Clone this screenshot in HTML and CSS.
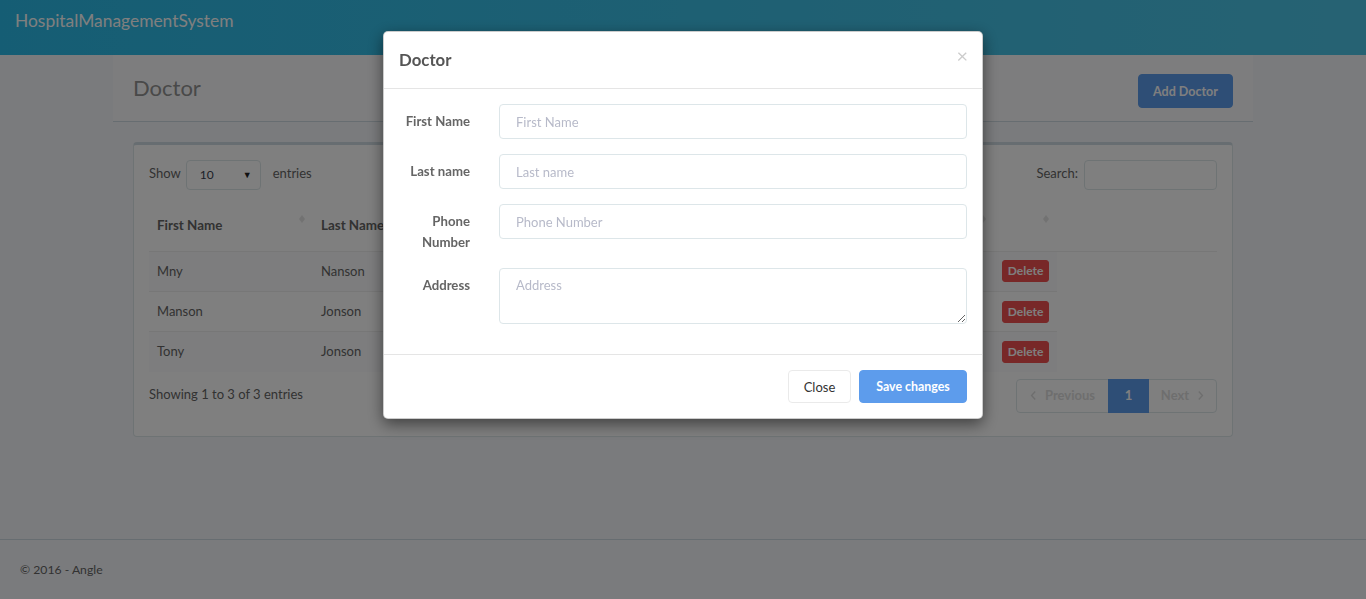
FILE: index.html
```html
<!DOCTYPE html>
<html lang="en">
<head>
<meta charset="utf-8">
<title>HospitalManagementSystem</title>
<link rel="stylesheet" href="styles.css">
</head>
<body>
<div class="wrapper">
  <header class="topbar">
    <div class="brand">HospitalManagementSystem</div>
  </header>
  <main class="main">
    <div class="container">
      <div class="content-heading">
        <h3 class="heading-title">Doctor</h3>
        <button class="btn btn-primary btn-add">Add Doctor</button>
      </div>
      <section class="panel">
        <div class="panel-body">
          <div class="dt-top">
            <div class="dt-length">
              <span>Show</span>
              <span class="fake-select"><span class="fs-val">10</span><span class="fs-caret">&#9660;</span></span>
              <span>entries</span>
            </div>
            <div class="dt-search">
              <span>Search:</span>
              <span class="search-input"></span>
            </div>
          </div>
          <div class="dt-head">
            <table class="tbl tbl-head">
              <thead>
                <tr>
                  <th class="c1">First Name<span class="sort"></span></th>
                  <th class="c2">Last Name<span class="sort"></span></th>
                  <th class="c3">Phone Number<span class="sort"></span></th>
                  <th class="c4">Address<span class="sort"></span></th>
                  <th class="c5"><span class="sort"></span></th>
                  <th class="c6"></th>
                </tr>
              </thead>
            </table>
          </div>
          <table class="tbl tbl-body">
            <tbody>
              <tr class="odd">
                <td class="c1">Mny</td><td class="c2">Nanson</td><td class="c3">0771234567</td><td class="c4">Colombo</td>
                <td class="c5"><button class="btn btn-danger btn-xs">Delete</button></td>
              </tr>
              <tr>
                <td class="c1">Manson</td><td class="c2">Jonson</td><td class="c3">0779876543</td><td class="c4">Kandy</td>
                <td class="c5"><button class="btn btn-danger btn-xs">Delete</button></td>
              </tr>
              <tr class="odd">
                <td class="c1">Tony</td><td class="c2">Jonson</td><td class="c3">0712345678</td><td class="c4">Galle</td>
                <td class="c5"><button class="btn btn-danger btn-xs">Delete</button></td>
              </tr>
            </tbody>
          </table>
          <div class="dt-bottom">
            <div class="dt-info">Showing 1 to 3 of 3 entries</div>
            <ul class="pagination">
              <li class="pg disabled"><svg class="chev" viewBox="0 0 8 12" width="7" height="11"><path d="M6 1.5L1.8 6L6 10.5" fill="none" stroke="currentColor" stroke-width="1.6"/></svg>Previous</li>
              <li class="pg active">1</li>
              <li class="pg disabled">Next<svg class="chev chev-r" viewBox="0 0 8 12" width="7" height="11"><path d="M2 1.5L6.2 6L2 10.5" fill="none" stroke="currentColor" stroke-width="1.6"/></svg></li>
            </ul>
          </div>
        </div>
      </section>
    </div>
  </main>
  <footer class="footer">&copy; 2016 - Angle</footer>
</div>

<div class="backdrop"></div>

<div class="modal" role="dialog">
  <div class="modal-header">
    <h4 class="modal-title">Doctor</h4>
    <span class="close">&times;</span>
  </div>
  <form class="modal-body">
    <div class="form-group">
      <label class="form-label">First Name</label>
      <div class="form-field"><input class="form-control" placeholder="First Name"></div>
    </div>
    <div class="form-group">
      <label class="form-label">Last name</label>
      <div class="form-field"><input class="form-control" placeholder="Last name"></div>
    </div>
    <div class="form-group">
      <label class="form-label">Phone Number</label>
      <div class="form-field"><input class="form-control" placeholder="Phone Number"></div>
    </div>
    <div class="form-group">
      <label class="form-label">Address</label>
      <div class="form-field"><textarea class="form-control textarea" placeholder="Address"></textarea></div>
    </div>
  </form>
  <div class="modal-footer">
    <button class="btn btn-default">Close</button>
    <button class="btn btn-primary btn-save">Save changes</button>
  </div>
</div>
</body>
</html>
```

FILE: styles.css
```css
* { box-sizing: border-box; }

html, body {
  margin: 0;
  padding: 0;
  height: 100%;
}

body {
  font-family: "Lato", "Source Sans Pro", "Liberation Sans", sans-serif;
  font-size: 13px;
  line-height: 1.5;
  color: #656565;
  background: #f5f7fa;
  overflow: hidden;
}

.wrapper {
  display: flex;
  flex-direction: column;
  height: 599px;
}

.topbar {
  height: 55px;
  flex: 0 0 55px;
  background: linear-gradient(90deg, #2bbbe8 0%, #4dc5e6 100%);
}

.brand {
  padding: 7px 15px 0;
  font-size: 17.4px;
  line-height: 28px;
  color: #ffffff;
}

.main {
  flex: 1 1 auto;
}

.container {
  width: 1140px;
  margin: 0 auto;
}

.content-heading {
  display: flex;
  justify-content: space-between;
  align-items: flex-start;
  height: 67px;
  padding: 19px 20px 0;
  background: #fafbfc;
  border-bottom: 1px solid #cfdbe2;
}

.heading-title {
  margin: -1px 0 0;
  font-size: 22px;
  font-weight: 400;
  line-height: 30px;
  color: #929292;
}

.btn {
  font-family: inherit;
  font-size: 13px;
  border: 1px solid transparent;
  border-radius: 4px;
  cursor: pointer;
}

.btn-primary {
  background: #5d9cec;
  border-color: #5d9cec;
  color: #ffffff;
  font-weight: 700;
}

.btn-add {
  height: 34px;
  width: 95px;
  padding: 0;
  font-size: 12.5px;
}

.panel {
  margin: 20px 20px 0;
  background: #ffffff;
  border: 1px solid #dde6e9;
  border-top: 3px solid #cfdbe2;
  border-radius: 4px;
}

.panel-body {
  padding: 15px 15px 23px;
}

.dt-top {
  display: flex;
  justify-content: space-between;
  align-items: center;
  height: 30px;
}

.dt-length {
  display: flex;
  align-items: center;
  gap: 5px;
  margin-top: -2px;
}

.fake-select {
  display: inline-flex;
  align-items: center;
  justify-content: space-between;
  width: 75px;
  height: 30px;
  margin: 2px 7px 0 0;
  padding: 0 8px 0 13px;
  border: 1px solid #dde6e9;
  border-radius: 4px;
  font-size: 12px;
  color: #3a3f51;
}

.fs-caret {
  font-size: 9px;
  color: #222;
}

.dt-search {
  display: flex;
  align-items: center;
  gap: 6px;
}

.dt-search > span:first-child {
  margin-top: -2px;
}

.search-input {
  width: 133px;
  height: 30px;
  border: 1px solid #dde6e9;
  border-radius: 4px;
}

.dt-head {
  margin-top: 10px;
}

.tbl {
  border-collapse: collapse;
  table-layout: fixed;
}

.tbl-head {
  width: 1068px;
}

.tbl-body {
  width: 908px;
}

.tbl th {
  position: relative;
  height: 51px;
  padding: 0 8px;
  text-align: left;
  font-size: 13.4px;
  font-weight: 700;
  border-bottom: 1px solid #eeeeee;
  color: #656565;
}

.tbl .c1 { width: 164px; }
.tbl .c2 { width: 187px; }
.tbl .c3 { width: 200px; }
.tbl .c4 { width: 294px; }
.tbl .c5 { width: 63px; }
.tbl .c6 { width: 160px; }

.sort {
  position: absolute;
  right: 8px;
  top: 15px;
  width: 6px;
  height: 8px;
  opacity: 0.25;
}
.sort::before,
.sort::after {
  content: "";
  position: absolute;
  left: 0;
  border-left: 3px solid transparent;
  border-right: 3px solid transparent;
}
.sort::before {
  top: 0;
  border-bottom: 4px solid #999;
}
.sort::after {
  bottom: 0;
  border-top: 4px solid #999;
}

.tbl td {
  height: 40px;
  padding: 0 8px;
  border-bottom: 1px solid #eeeeee;
  white-space: nowrap;
  overflow: hidden;
}

.tbl tbody tr.odd td {
  background: #fafbfc;
}

.tbl tbody tr:last-child td {
  border-bottom: 0;
}

.btn-danger {
  background: #f05050;
  border-color: #f05050;
  color: #ffffff;
  font-weight: 700;
}

.btn-xs {
  width: 47px;
  height: 22px;
  padding: 0;
  font-size: 12px;
  line-height: 20px;
  border-radius: 3px;
}

.dt-bottom {
  display: flex;
  justify-content: space-between;
  align-items: center;
  margin-top: 7px;
}

.dt-info {
  margin-top: -1px;
}

.pagination {
  display: flex;
  margin: 0;
  padding: 0;
  list-style: none;
}

.pg {
  display: flex;
  align-items: center;
  justify-content: center;
  height: 34px;
  border: 1px solid #dde6e9;
  margin-left: -1px;
  font-weight: 700;
}

.pg:first-child {
  width: 93px;
  border-radius: 4px 0 0 4px;
}

.pg:last-child {
  width: 69px;
  border-radius: 0 4px 4px 0;
}

.pg.disabled {
  color: #dddddd;
}

.pg.active {
  width: 41px;
  background: #5d9cec;
  border-color: #5d9cec;
  color: #ffffff;
  position: relative;
  z-index: 1;
}

.chev { margin-right: 8px; }
.chev-r { margin: 0 0 0 8px; }

.footer {
  flex: 0 0 60px;
  height: 60px;
  padding: 20px 20px 19px;
  border-top: 1px solid #cfdbe2;
  font-size: 12.2px;
  line-height: 20px;
}

.backdrop {
  position: fixed;
  inset: 0;
  z-index: 1040;
  background: rgba(0, 0, 0, 0.5);
}

.modal {
  position: fixed;
  top: 31px;
  left: 383px;
  z-index: 1050;
  width: 600px;
  background: #ffffff;
  border: 1px solid rgba(0, 0, 0, 0.2);
  border-radius: 5px;
  box-shadow: 0 5px 15px rgba(0, 0, 0, 0.5);
}

.modal-header {
  position: relative;
  height: 57px;
  padding: 15px;
  border-bottom: 1px solid #e5e5e5;
}

.modal-title {
  margin: 0;
  font-size: 16.8px;
  font-weight: 700;
  line-height: 26px;
  color: #555555;
}

.close {
  position: absolute;
  top: 13px;
  right: 14px;
  font-size: 20px;
  line-height: 20px;
  color: #000;
  opacity: 0.2;
}

.modal-body {
  display: block;
  margin: 0;
  padding: 15px 0 15px;
}

.form-group {
  display: flex;
  margin-bottom: 15px;
}

.form-label {
  flex: 0 0 100px;
  padding: 7px 14px 0 15px;
  text-align: right;
  font-size: 13.2px;
  font-weight: 700;
  line-height: 21px;
  color: #656565;
}

.form-field {
  flex: 1 1 auto;
  padding: 0 15px;
}

.form-control {
  display: block;
  width: 100%;
  height: 35px;
  padding: 6px 16px;
  border: 1px solid #dde6e9;
  border-radius: 4px;
  font-family: inherit;
  font-size: 13px;
  color: #3a3f51;
  background: #fff;
}

.form-control::placeholder {
  color: #b7bac9;
}

.textarea {
  height: 56px;
  resize: vertical;
  line-height: 21px;
  padding-top: 6px;
}

.modal-footer {
  display: flex;
  justify-content: flex-end;
  gap: 8px;
  padding: 15px;
  border-top: 1px solid #e5e5e5;
}

.btn-default {
  height: 33px;
  width: 63px;
  background: #fff;
  border-color: #eaeaea;
  color: #333;
  font-size: 13px;
}

.btn-save {
  height: 33px;
  width: 108px;
  font-size: 12.4px;
}
```
